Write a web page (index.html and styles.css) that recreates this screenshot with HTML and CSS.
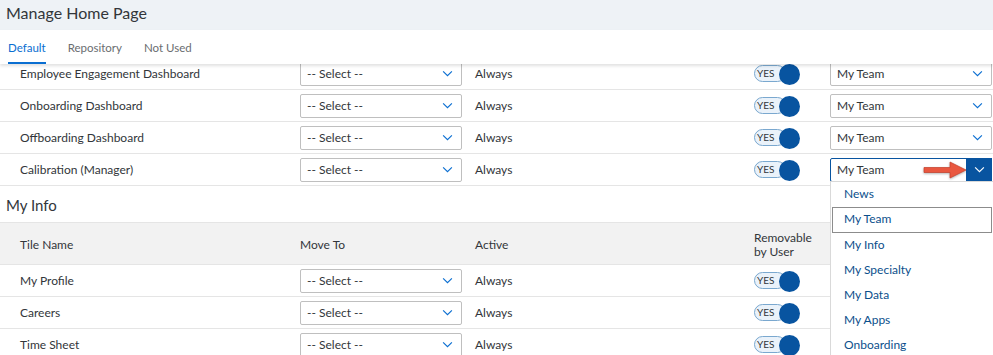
FILE: index.html
```html
<!DOCTYPE html>
<html lang="en">
<head>
    <meta charset="UTF-8" />
    <meta name="viewport" content="width=device-width, initial-scale=1.0" />
    <title>Manage Home Page</title>
    <link rel="stylesheet" href="styles.css">
</head>
<body>
    <div class="page-header">
        <h1>Manage Home Page</h1>
    </div>
    <div class="tabs">
        <span class="tab active">Default</span>
        <span class="tab">Repository</span>
        <span class="tab">Not Used</span>
    </div>

    <main class="content">
        <div class="scroll">
            <div class="row">
                <div class="col-name">Employee Engagement Dashboard</div>
                <div class="col-move"><div class="select"><span>-- Select --</span><svg class="chev" viewBox="0 0 12 8"><path d="M1 1.5 L6 6.5 L11 1.5" /></svg></div></div>
                <div class="col-active">Always</div>
                <div class="col-remove"><span class="toggle"><span class="toggle-text">YES</span><span class="knob"></span></span></div>
                <div class="col-section"><div class="select"><span>My Team</span><svg class="chev" viewBox="0 0 12 8"><path d="M1 1.5 L6 6.5 L11 1.5" /></svg></div></div>
            </div>
            <div class="row">
                <div class="col-name">Onboarding Dashboard</div>
                <div class="col-move"><div class="select"><span>-- Select --</span><svg class="chev" viewBox="0 0 12 8"><path d="M1 1.5 L6 6.5 L11 1.5" /></svg></div></div>
                <div class="col-active">Always</div>
                <div class="col-remove"><span class="toggle"><span class="toggle-text">YES</span><span class="knob"></span></span></div>
                <div class="col-section"><div class="select"><span>My Team</span><svg class="chev" viewBox="0 0 12 8"><path d="M1 1.5 L6 6.5 L11 1.5" /></svg></div></div>
            </div>
            <div class="row">
                <div class="col-name">Offboarding Dashboard</div>
                <div class="col-move"><div class="select"><span>-- Select --</span><svg class="chev" viewBox="0 0 12 8"><path d="M1 1.5 L6 6.5 L11 1.5" /></svg></div></div>
                <div class="col-active">Always</div>
                <div class="col-remove"><span class="toggle"><span class="toggle-text">YES</span><span class="knob"></span></span></div>
                <div class="col-section"><div class="select"><span>My Team</span><svg class="chev" viewBox="0 0 12 8"><path d="M1 1.5 L6 6.5 L11 1.5" /></svg></div></div>
            </div>
            <div class="row">
                <div class="col-name">Calibration (Manager)</div>
                <div class="col-move"><div class="select"><span>-- Select --</span><svg class="chev" viewBox="0 0 12 8"><path d="M1 1.5 L6 6.5 L11 1.5" /></svg></div></div>
                <div class="col-active">Always</div>
                <div class="col-remove"><span class="toggle"><span class="toggle-text">YES</span><span class="knob"></span></span></div>
                <div class="col-section">
                    <div class="select open">
                        <span>My Team</span>
                        <span class="select-btn"><svg class="chev" viewBox="0 0 12 8"><path d="M1 1.5 L6 6.5 L11 1.5" /></svg></span>
                        <svg class="red-arrow" viewBox="0 0 46 20">
                            <path d="M2 7.5 H28 V2 L44 10 L28 18 V12.5 H2 Z" />
                        </svg>
                        <ul class="popup">
                            <li>News</li>
                            <li class="focused">My Team</li>
                            <li>My Info</li>
                            <li>My Specialty</li>
                            <li>My Data</li>
                            <li>My Apps</li>
                            <li>Onboarding</li>
                        </ul>
                    </div>
                </div>
            </div>

            <h2 class="section-title">My Info</h2>

            <div class="row head">
                <div class="col-name">Tile Name</div>
                <div class="col-move">Move To</div>
                <div class="col-active">Active</div>
                <div class="col-remove">Removable<br>by User</div>
                <div class="col-section"></div>
            </div>
            <div class="row">
                <div class="col-name">My Profile</div>
                <div class="col-move"><div class="select"><span>-- Select --</span><svg class="chev" viewBox="0 0 12 8"><path d="M1 1.5 L6 6.5 L11 1.5" /></svg></div></div>
                <div class="col-active">Always</div>
                <div class="col-remove"><span class="toggle"><span class="toggle-text">YES</span><span class="knob"></span></span></div>
                <div class="col-section"></div>
            </div>
            <div class="row">
                <div class="col-name">Careers</div>
                <div class="col-move"><div class="select"><span>-- Select --</span><svg class="chev" viewBox="0 0 12 8"><path d="M1 1.5 L6 6.5 L11 1.5" /></svg></div></div>
                <div class="col-active">Always</div>
                <div class="col-remove"><span class="toggle"><span class="toggle-text">YES</span><span class="knob"></span></span></div>
                <div class="col-section"></div>
            </div>
            <div class="row">
                <div class="col-name">Time Sheet</div>
                <div class="col-move"><div class="select"><span>-- Select --</span><svg class="chev" viewBox="0 0 12 8"><path d="M1 1.5 L6 6.5 L11 1.5" /></svg></div></div>
                <div class="col-active">Always</div>
                <div class="col-remove"><span class="toggle"><span class="toggle-text">YES</span><span class="knob"></span></span></div>
                <div class="col-section"></div>
            </div>
        </div>
    </main>
</body>
</html>
```

FILE: styles.css
```css
body {
    margin: 0;
    font-family: Lato, "Liberation Sans", Arial, sans-serif;
    font-size: 12px;
    color: #32363a;
    background-color: #ffffff;
    height: 355px;
    overflow: hidden;
    display: flex;
    flex-direction: column;
}

.page-header {
    height: 30px;
    box-sizing: border-box;
    background-color: #eef2f6;
    padding-left: 6px;
    padding-top: 3px;
}

h1 {
    margin: 0;
    font-size: 16px;
    line-height: 20px;
    font-weight: normal;
    color: #32363a;
}

.tabs {
    height: 34px;
    display: flex;
    align-items: stretch;
    padding-left: 8px;
    gap: 22px;
    font-size: 11.5px;
    box-shadow: 0 2px 3px rgba(0, 0, 0, 0.12);
    position: relative;
    z-index: 2;
    background-color: #ffffff;
}

.tab {
    display: flex;
    align-items: center;
    color: #6a6d70;
    border-bottom: 2px solid transparent;
    padding-top: 3px;
}

.tab.active {
    color: #0a6ed1;
    border-bottom-color: #0a6ed1;
}

.content {
    flex: 1;
    overflow: hidden;
}

.scroll {
    margin-top: -6px;
}

.row {
    display: flex;
    align-items: center;
    height: 32px;
    border-bottom: 1px solid #e5e5e5;
    box-sizing: border-box;
}

.col-name {
    width: 300px;
    padding-left: 20px;
    box-sizing: border-box;
}

.col-move {
    width: 175px;
}

.col-active {
    width: 279px;
}

.col-remove {
    width: 76px;
}

.col-section {
    width: 163px;
}

.select {
    height: 24px;
    width: 162px;
    box-sizing: border-box;
    border: 1px solid #bfbfbf;
    border-radius: 2px;
    display: flex;
    align-items: center;
    justify-content: space-between;
    padding-left: 6px;
    padding-right: 8px;
    background-color: #ffffff;
}

.chev {
    width: 11px;
    height: 7px;
    fill: none;
    stroke: #0a6ed1;
    stroke-width: 1.3;
}

.select.open {
    position: relative;
    padding-right: 0;
    border-color: #0854a0;
}

.select-btn {
    width: 26px;
    height: 24px;
    margin-right: -1px;
    background-color: #0854a0;
    display: flex;
    align-items: center;
    justify-content: center;
}

.select-btn .chev {
    stroke: #ffffff;
}

.red-arrow {
    position: absolute;
    left: 91px;
    top: 1px;
    width: 46px;
    height: 20px;
    fill: #e9573f;
    stroke: #c43e2a;
    stroke-width: 0.7;
    filter: drop-shadow(0 1px 1px rgba(0, 0, 0, 0.3));
}

.popup {
    position: absolute;
    left: -1px;
    top: 22px;
    width: 162px;
    margin: 0;
    padding: 0 0 0 1px;
    list-style: none;
    background-color: #ffffff;
    border: 1px solid #d9d9d9;
    border-right: none;
    z-index: 3;
}

.popup li {
    height: 25px;
    line-height: 24px;
    padding-left: 12px;
    color: #0b4f8c;
}

.popup li.focused {
    height: 24px;
    line-height: 22px;
    border: 1px solid #8c8c8c;
    margin-right: 2px;
    padding-left: 11px;
}

.toggle {
    position: relative;
    display: inline-flex;
    align-items: center;
    width: 46px;
    height: 22px;
}

.toggle-text {
    box-sizing: border-box;
    width: 32px;
    height: 17px;
    border: 1px solid #7aa8cf;
    border-radius: 9px;
    background-color: #eaf2fa;
    font-size: 10px;
    line-height: 15px;
    padding-left: 2px;
    color: #32363a;
}

.knob {
    position: absolute;
    left: 25px;
    top: 1px;
    width: 21px;
    height: 21px;
    border-radius: 50%;
    background-color: #0854a0;
}

.section-title {
    margin: 0;
    height: 34px;
    display: flex;
    align-items: center;
    padding-left: 6px;
    padding-top: 2px;
    font-size: 15px;
    font-weight: normal;
    border-bottom: 1px solid #e5e5e5;
}

.row.head {
    height: 42px;
    background-color: #f2f2f2;
    line-height: 14px;
    padding-top: 3px;
}
```
